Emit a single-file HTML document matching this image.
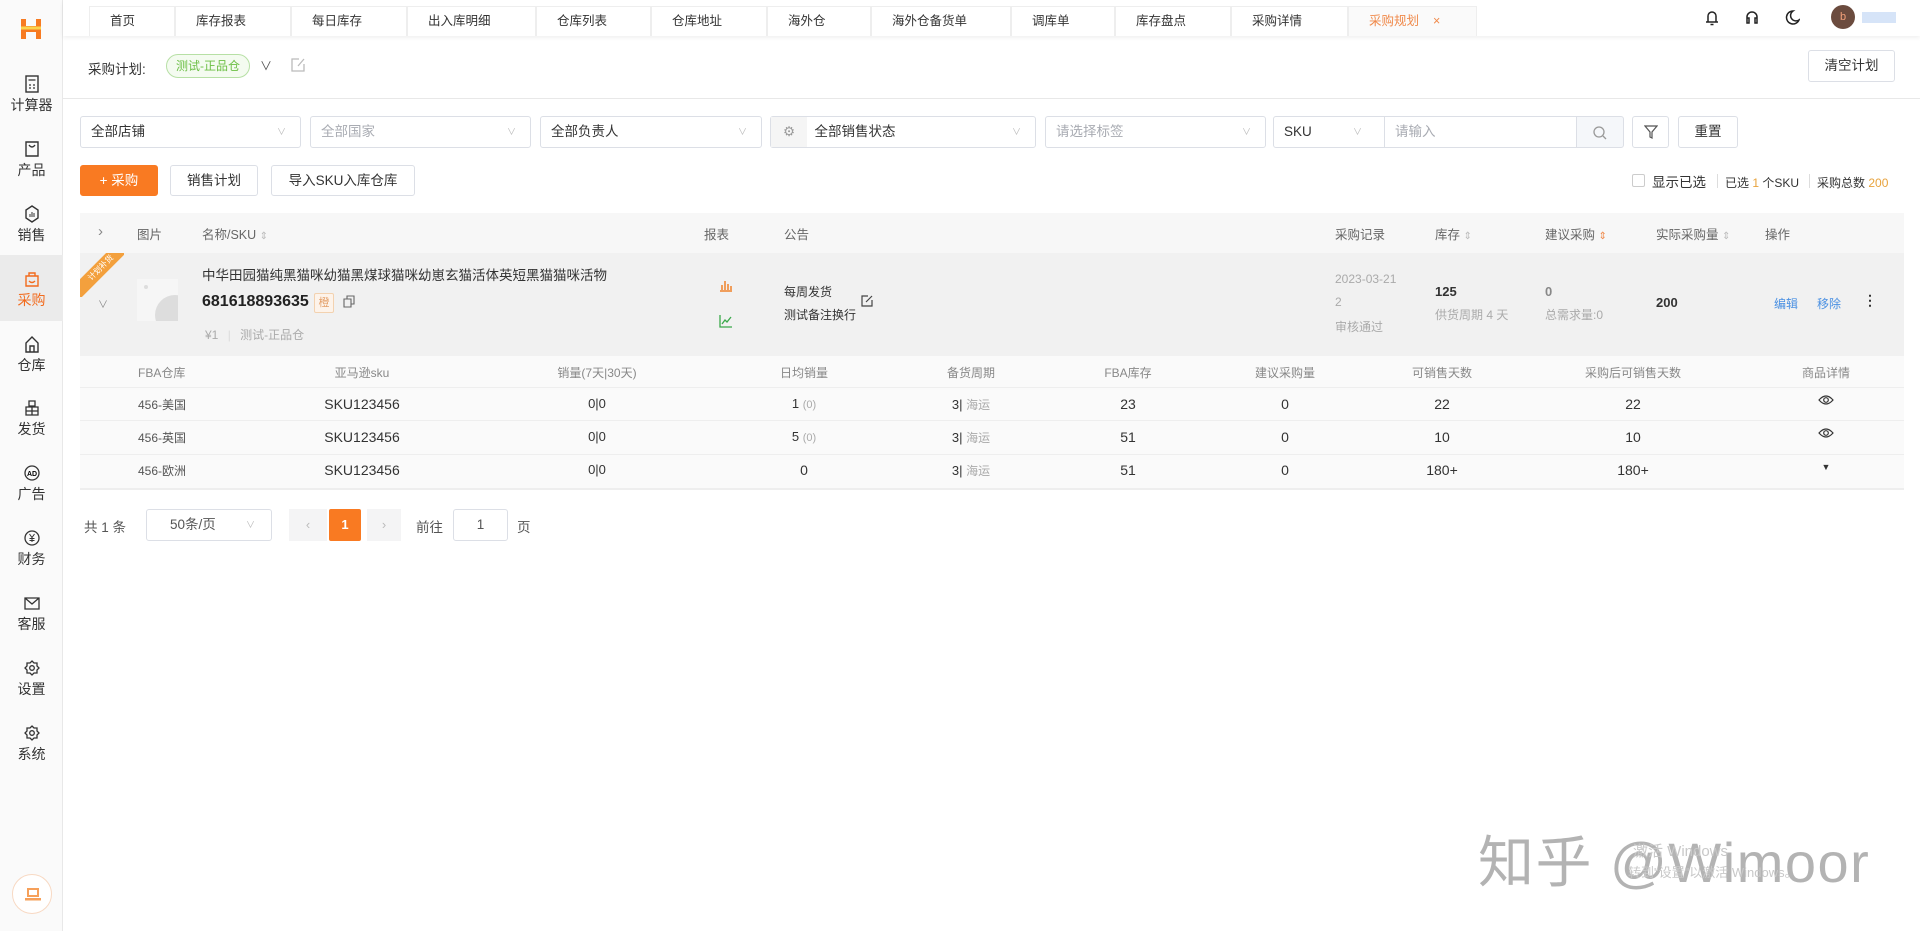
<!DOCTYPE html>
<html><head><meta charset="utf-8">
<style>
*{box-sizing:border-box;margin:0;padding:0}
body{width:1920px;height:931px;overflow:hidden;background:#fff;font-family:"Liberation Sans","Noto Sans CJK SC",sans-serif;font-size:13px;color:#333;position:relative}
.a{position:absolute;white-space:nowrap}
.side{position:absolute;left:0;top:0;width:63px;height:931px;background:#fafafa;border-right:1px solid #e8e8e8}
.si{position:absolute;left:0;width:63px;text-align:center;font-size:14px;color:#333}
.si svg{display:block;margin:0 auto 2px}
.tabs{position:absolute;left:63px;top:0;right:0;height:36px;background:#fff;box-shadow:0 2px 4px rgba(0,0,0,.06)}
.tab{position:absolute;top:6px;height:30px;line-height:28px;border:1px solid #eee;border-bottom:none;padding-left:20px;font-size:12.5px;color:#333;background:#fff}
.box{position:absolute;border:1px solid #dcdfe6;border-radius:3px;height:32px;line-height:30px;padding-left:10px;font-size:13.5px;color:#333;background:#fff}
.ph{color:#a8abb2}
.chev{position:absolute;right:14px;top:0;color:#bbb;font-size:9px}
.btn{position:absolute;border:1px solid #dcdfe6;border-radius:3px;height:31px;line-height:29px;text-align:center;font-size:13.5px;background:#fff;color:#333}
.g{color:#999}
.hd{color:#666;font-size:12.5px}
.sh{color:#888}
.c{position:absolute;text-align:center;transform:translateX(-50%);white-space:nowrap}
</style></head><body>

<div class="side">
 <svg class="a" style="left:18px;top:17px" width="26" height="24" viewBox="0 0 26 24"><path d="M3 2h5v7h10V2h5v20h-5v-7H8v7H3z" fill="#f77b22"/><path d="M3 11h20" stroke="#fbd34d" stroke-width="3"/></svg>
 <div class="si" style="top:75px"><svg width="16" height="18" viewBox="0 0 16 18"><rect x="2" y="1" width="12" height="16" fill="none" stroke="#333" stroke-width="1.4"/><path d="M4.5 5h7M5 10h2M9 10h2M5 13h2M9 13h2" stroke="#333" stroke-width="1.2"/></svg>计算器</div>
 <div class="si" style="top:140px"><svg width="16" height="18" viewBox="0 0 16 18"><path d="M2 2h12v14H2z M5 5q3 4 6 0" fill="none" stroke="#333" stroke-width="1.4"/></svg>产品</div>
 <div class="si" style="top:205px"><svg width="16" height="18" viewBox="0 0 16 18"><path d="M8 1l6 4v8l-6 4-6-4V5z" fill="none" stroke="#333" stroke-width="1.4"/><path d="M6 9v3M8 7v5M10 8v4" stroke="#333"/></svg>销售</div>
 <div style="position:absolute;left:0;top:255px;width:63px;height:66px;background:#ebebeb"></div>
 <div class="si" style="top:270px;color:#f26b1d"><svg width="16" height="18" viewBox="0 0 16 18"><path d="M2 6h12v10H2z M5 6V3h6v3 M5 11q3 3 6 0" fill="none" stroke="#f26b1d" stroke-width="1.4"/></svg>采购</div>
 <div class="si" style="top:335px"><svg width="16" height="18" viewBox="0 0 16 18"><path d="M2 8l6-6 6 6v9H2z M6 17v-6h4v6" fill="none" stroke="#333" stroke-width="1.4"/></svg>仓库</div>
 <div class="si" style="top:399px"><svg width="16" height="18" viewBox="0 0 16 18"><path d="M5 2h6v5H5z M2 8h12v8H2z M8 8v8M2 12h12" fill="none" stroke="#333" stroke-width="1.3"/></svg>发货</div>
 <div class="si" style="top:464px"><svg width="16" height="18" viewBox="0 0 16 18"><circle cx="8" cy="9" r="7" fill="none" stroke="#333" stroke-width="1.3"/><text x="8" y="12" font-size="7" text-anchor="middle" font-family="Liberation Sans" font-weight="bold">AD</text></svg>广告</div>
 <div class="si" style="top:529px"><svg width="16" height="18" viewBox="0 0 16 18"><circle cx="8" cy="9" r="7" fill="none" stroke="#333" stroke-width="1.3"/><path d="M5.5 5l2.5 3.5L10.5 5M8 8.5V13M5.5 9.5h5M5.5 11.5h5" stroke="#333" fill="none"/></svg>财务</div>
 <div class="si" style="top:594px"><svg width="18" height="18" viewBox="0 0 18 18"><path d="M2 4h14v11H2z M2 4l7 6 7-6" fill="none" stroke="#333" stroke-width="1.3"/></svg>客服</div>
 <div class="si" style="top:659px"><svg width="16" height="18" viewBox="0 0 16 18"><circle cx="8" cy="9" r="2.3" fill="none" stroke="#333" stroke-width="1.3"/><path d="M8 2l2 2h3v3l2 2-2 2v3h-3l-2 2-2-2H3v-3L1 9l2-2V4h3z" fill="none" stroke="#333" stroke-width="1.3"/></svg>设置</div>
 <div class="si" style="top:724px"><svg width="16" height="18" viewBox="0 0 16 18"><circle cx="8" cy="9" r="2.3" fill="none" stroke="#333" stroke-width="1.3"/><path d="M8 2l2 2h3v3l2 2-2 2v3h-3l-2 2-2-2H3v-3L1 9l2-2V4h3z" fill="none" stroke="#333" stroke-width="1.3"/></svg>系统</div>
 <div class="a" style="left:12px;top:874px;width:40px;height:40px;border-radius:50%;border:1px solid #f8d9c3;background:#fff"><svg class="a" style="left:12px;top:12px" width="16" height="14" viewBox="0 0 16 14"><rect x="2" y="1" width="12" height="9" fill="#f6a05a"/><rect x="0" y="11" width="16" height="2.5" fill="#f6a05a"/><rect x="4" y="3" width="8" height="5" fill="#fff"/></svg></div>
</div>

<div class="tabs">
 <div class="tab" style="left:26px;width:86px">首页</div>
 <div class="tab" style="left:112px;width:116px">库存报表</div>
 <div class="tab" style="left:228px;width:116px">每日库存</div>
 <div class="tab" style="left:344px;width:129px">出入库明细</div>
 <div class="tab" style="left:473px;width:115px">仓库列表</div>
 <div class="tab" style="left:588px;width:116px">仓库地址</div>
 <div class="tab" style="left:704px;width:104px">海外仓</div>
 <div class="tab" style="left:808px;width:140px">海外仓备货单</div>
 <div class="tab" style="left:948px;width:104px">调库单</div>
 <div class="tab" style="left:1052px;width:116px">库存盘点</div>
 <div class="tab" style="left:1168px;width:117px">采购详情</div>
 <div class="tab" style="left:1285px;width:129px;color:#f08a4b;background:#fafafa">采购规划<span style="position:absolute;left:84px;color:#f08a4b">×</span></div>
</div>
<svg class="a" style="left:1704px;top:9px" width="16" height="18" viewBox="0 0 16 18"><path d="M4 13V7a4 4 0 018 0v6M2 13h12M6.5 15.5h3" fill="none" stroke="#222" stroke-width="1.5"/></svg>
<svg class="a" style="left:1744px;top:9px" width="16" height="18" viewBox="0 0 16 18"><path d="M3 10V8a5 5 0 0110 0v2M3 9h2v5H3zM11 9h2v5h-2z" fill="none" stroke="#222" stroke-width="1.5"/></svg>
<svg class="a" style="left:1784px;top:9px" width="16" height="18" viewBox="0 0 16 18"><path d="M9 2a6.5 6.5 0 106 9A5 5 0 019 2z" fill="none" stroke="#222" stroke-width="1.5"/></svg>
<div class="a" style="left:1831px;top:5px;width:24px;height:24px;border-radius:50%;background:#6b4b3e;color:#f2a07a;font-size:11px;text-align:center;line-height:24px">b</div>
<div class="a" style="left:1862px;top:12px;width:34px;height:11px;background:#d6e4f8"></div>

<div class="a" style="left:88px;top:58px;font-size:13.5px">采购计划:</div>
<div class="a" style="left:166px;top:54px;width:84px;height:24px;border:1px solid #b7e0a5;border-radius:12px;background:#f4fbf0;color:#6cbf45;font-size:12px;text-align:center;line-height:22px">测试-正品仓</div>
<div class="a" style="left:260px;top:57px;color:#555;font-size:12px">∨</div>
<svg class="a" style="left:290px;top:57px" width="16" height="16" viewBox="0 0 16 16"><path d="M9 2H2v12h12V7M8 9l6-7" fill="none" stroke="#bbb" stroke-width="1.3"/></svg>
<div class="btn" style="left:1808px;top:50px;width:87px;height:32px;line-height:30px">清空计划</div>
<div class="a" style="left:63px;top:98px;width:1857px;height:1px;background:#e8e8e8"></div>

<div class="box" style="left:80px;top:116px;width:221px">全部店铺<span class="chev">∨</span></div>
<div class="box ph" style="left:310px;top:116px;width:221px">全部国家<span class="chev">∨</span></div>
<div class="box" style="left:540px;top:116px;width:222px">全部负责人<span class="chev">∨</span></div>
<div class="box" style="left:770px;top:116px;width:266px;padding-left:0"><span style="display:inline-block;width:36px;height:30px;background:#f5f5f5;text-align:center;color:#999">⚙</span>&nbsp; 全部销售状态<span class="chev">∨</span></div>
<div class="box ph" style="left:1045px;top:116px;width:221px">请选择标签<span class="chev">∨</span></div>
<div class="box" style="left:1273px;top:116px;width:112px;border-radius:3px 0 0 3px">SKU<span class="chev" style="right:22px">∨</span></div>
<div class="box ph" style="left:1384px;top:116px;width:193px;border-radius:0">请输入</div>
<div class="box" style="left:1576px;top:116px;width:48px;background:#f5f7fa;border-radius:0 3px 3px 0;padding:0"><svg style="margin:8px 0 0 15px" width="16" height="16" viewBox="0 0 16 16"><circle cx="7" cy="7" r="5" fill="none" stroke="#999" stroke-width="1.3"/><path d="M11 11l3 3" stroke="#999" stroke-width="1.3"/></svg></div>
<div class="box" style="left:1632px;top:116px;width:37px;padding:0"><svg style="margin:8px 0 0 11px" width="14" height="14" viewBox="0 0 14 14"><path d="M1 1h12L8 7v6L6 12V7z" fill="none" stroke="#555" stroke-width="1.2"/></svg></div>
<div class="box" style="left:1678px;top:116px;width:60px;padding:0;text-align:center">重置</div>

<div class="btn" style="left:80px;top:165px;width:78px;background:#f97a22;border-color:#f97a22;color:#fff">+ 采购</div>
<div class="btn" style="left:170px;top:165px;width:88px">销售计划</div>
<div class="btn" style="left:271px;top:165px;width:144px">导入SKU入库仓库</div>
<div class="a" style="left:1632px;top:174px;width:13px;height:13px;border:1px solid #ccc;border-radius:2px"></div>
<div class="a" style="left:1652px;top:171px;font-size:13.5px;color:#333">显示已选</div>
<div class="a" style="left:1717px;top:174px;width:1px;height:14px;background:#ddd"></div>
<div class="a" style="left:1725px;top:174px;font-size:12px">已选 <span style="color:#e8a33d">1</span> 个SKU</div>
<div class="a" style="left:1809px;top:174px;width:1px;height:14px;background:#ddd"></div>
<div class="a" style="left:1817px;top:174px;font-size:12px">采购总数 <span style="color:#e8a33d">200</span></div>

<div class="a" style="left:80px;top:213px;width:1824px;height:40px;background:#f7f7f7"></div>
<div class="a hd" style="left:98px;top:223px;font-size:15px;color:#888">›</div>
<div class="a hd" style="left:137px;top:224px">图片</div>
<div class="a hd" style="left:202px;top:224px">名称/SKU <span style="color:#bbb;font-size:10px">⇕</span></div>
<div class="a hd" style="left:704px;top:224px">报表</div>
<div class="a hd" style="left:784px;top:224px">公告</div>
<div class="a hd" style="left:1335px;top:224px">采购记录</div>
<div class="a hd" style="left:1435px;top:224px">库存 <span style="color:#bbb;font-size:10px">⇕</span></div>
<div class="a hd" style="left:1545px;top:224px">建议采购 <span style="color:#f08a4b;font-size:10px">⇕</span></div>
<div class="a hd" style="left:1656px;top:224px">实际采购量 <span style="color:#bbb;font-size:10px">⇕</span></div>
<div class="a hd" style="left:1765px;top:224px">操作</div>

<div class="a" style="left:80px;top:253px;width:1824px;height:103px;background:#f1f1f1"></div>
<div class="a" style="left:80px;top:253px;width:44px;height:44px;overflow:hidden"><div style="position:absolute;left:-24px;top:8px;width:90px;height:14px;background:#f3a03d;transform:rotate(-45deg);color:#fff;font-size:8px;text-align:center;line-height:14px">计划补货</div></div>
<div class="a" style="left:98px;top:296px;color:#888;font-size:10px">∨</div>
<div class="a" style="left:137px;top:279px;width:41px;height:42px;background:#f6f6f6;overflow:hidden"><div style="position:absolute;left:18px;top:16px;width:40px;height:40px;border-radius:50%;background:#ddd"></div><div style="position:absolute;left:7px;top:6px;width:4px;height:4px;border-radius:50%;background:#ddd"></div></div>
<div class="a" style="left:202px;top:264px;font-size:13.5px">中华田园猫纯黑猫咪幼猫黑煤球猫咪幼崽玄猫活体英短黑猫猫咪活物</div>
<div class="a" style="left:202px;top:293px;font-size:16px;font-weight:bold;color:#222">681618893635</div>
<div class="a" style="left:314px;top:293px;width:20px;height:20px;border:1px solid #f3d2b0;background:#fdf3ea;color:#e4a06a;font-size:11px;text-align:center;line-height:18px;border-radius:2px">橙</div>
<svg class="a" style="left:343px;top:295px" width="12" height="13" viewBox="0 0 12 13"><path d="M1 4h7v8H1zM4 4V1h7v8H8" fill="none" stroke="#666" stroke-width="1.1"/></svg>
<div class="a g" style="left:205px;top:326px;font-size:12px;color:#aaa">¥1 <span style="color:#ddd;margin:0 6px">|</span> 测试-正品仓</div>
<svg class="a" style="left:719px;top:278px" width="14" height="14" viewBox="0 0 14 14"><path d="M1 13h12M3 12V7M6 12V3M9 12V6M12 12V8" stroke="#f0832a" stroke-width="1.5"/></svg>
<svg class="a" style="left:719px;top:314px" width="14" height="14" viewBox="0 0 14 14"><path d="M1 1v12h12M3 10l3-4 2 2 4-5" fill="none" stroke="#3aa84a" stroke-width="1.3"/></svg>
<div class="a" style="left:784px;top:283px;font-size:12px">每周发货</div>
<div class="a" style="left:784px;top:306px;font-size:12px">测试备注换行</div>
<svg class="a" style="left:861px;top:295px" width="12" height="12" viewBox="0 0 12 12"><path d="M7 1H1v10h10V5M5 7l6-6" fill="none" stroke="#444" stroke-width="1.2"/></svg>
<div class="a" style="left:1335px;top:272px;font-size:12px;color:#aaa">2023-03-21</div>
<div class="a" style="left:1335px;top:295px;font-size:12px;color:#aaa">2</div>
<div class="a" style="left:1335px;top:318px;font-size:12px;color:#aaa">审核通过</div>
<div class="a" style="left:1435px;top:284px;font-size:13px;font-weight:bold">125</div>
<div class="a" style="left:1435px;top:306px;font-size:12px;color:#aaa">供货周期 4 天</div>
<div class="a" style="left:1545px;top:284px;font-size:13px;font-weight:bold;color:#888">0</div>
<div class="a" style="left:1545px;top:306px;font-size:12px;color:#aaa">总需求量:0</div>
<div class="a" style="left:1656px;top:295px;font-size:13px;font-weight:bold">200</div>
<div class="a" style="left:1774px;top:295px;font-size:12px;color:#4a90e2">编辑</div>
<div class="a" style="left:1817px;top:295px;font-size:12px;color:#4a90e2">移除</div>
<div class="a" style="left:1863px;top:292px;font-size:14px;font-weight:bold;color:#333">⋮</div>

<div class="a" style="left:80px;top:356px;width:1824px;height:132px;background:#fafafa"></div>
<div class="a" style="left:80px;top:387px;width:1824px;height:1px;background:#eee"></div>
<div class="a" style="left:80px;top:420px;width:1824px;height:1px;background:#eee"></div>
<div class="a" style="left:80px;top:454px;width:1824px;height:1px;background:#eee"></div>
<div class="a" style="left:80px;top:488px;width:1824px;height:2px;background:#eee"></div>

<div class="a sh" style="left:138px;top:364px;font-size:12px">FBA仓库</div>
<div class="c sh" style="left:362px;top:364px;font-size:12px">亚马逊sku</div>
<div class="c sh" style="left:597px;top:364px;font-size:12px">销量(7天|30天)</div>
<div class="c sh" style="left:804px;top:364px;font-size:12px">日均销量</div>
<div class="c sh" style="left:971px;top:364px;font-size:12px">备货周期</div>
<div class="c sh" style="left:1128px;top:364px;font-size:12px">FBA库存</div>
<div class="c sh" style="left:1285px;top:364px;font-size:12px">建议采购量</div>
<div class="c sh" style="left:1442px;top:364px;font-size:12px">可销售天数</div>
<div class="c sh" style="left:1633px;top:364px;font-size:12px">采购后可销售天数</div>
<div class="c sh" style="left:1826px;top:364px;font-size:12px">商品详情</div>

<div class="a" style="left:138px;top:396px;font-size:12px;color:#555">456-美国</div>
<div class="c" style="left:362px;top:396px;font-size:14px">SKU123456</div>
<div class="c" style="left:597px;top:396px">0|0</div>
<div class="c" style="left:804px;top:396px">1 <span style="color:#aaa;font-size:11px">(0)</span></div>
<div class="c" style="left:971px;top:396px">3| <span style="color:#aaa;font-size:12px">海运</span></div>
<div class="c" style="left:1128px;top:396px;font-size:14px">23</div>
<div class="c" style="left:1285px;top:396px;font-size:14px">0</div>
<div class="c" style="left:1442px;top:396px;font-size:14px">22</div>
<div class="c" style="left:1633px;top:396px;font-size:14px">22</div>
<svg class="a" style="left:1818px;top:394px" width="16" height="12" viewBox="0 0 16 12"><path d="M1 6q7-8 14 0q-7 8-14 0z" fill="none" stroke="#333" stroke-width="1.2"/><circle cx="8" cy="6" r="2.3" fill="none" stroke="#333" stroke-width="1.2"/></svg>

<div class="a" style="left:138px;top:429px;font-size:12px;color:#555">456-英国</div>
<div class="c" style="left:362px;top:429px;font-size:14px">SKU123456</div>
<div class="c" style="left:597px;top:429px">0|0</div>
<div class="c" style="left:804px;top:429px">5 <span style="color:#aaa;font-size:11px">(0)</span></div>
<div class="c" style="left:971px;top:429px">3| <span style="color:#aaa;font-size:12px">海运</span></div>
<div class="c" style="left:1128px;top:429px;font-size:14px">51</div>
<div class="c" style="left:1285px;top:429px;font-size:14px">0</div>
<div class="c" style="left:1442px;top:429px;font-size:14px">10</div>
<div class="c" style="left:1633px;top:429px;font-size:14px">10</div>
<svg class="a" style="left:1818px;top:427px" width="16" height="12" viewBox="0 0 16 12"><path d="M1 6q7-8 14 0q-7 8-14 0z" fill="none" stroke="#333" stroke-width="1.2"/><circle cx="8" cy="6" r="2.3" fill="none" stroke="#333" stroke-width="1.2"/></svg>

<div class="a" style="left:138px;top:462px;font-size:12px;color:#555">456-欧洲</div>
<div class="c" style="left:362px;top:462px;font-size:14px">SKU123456</div>
<div class="c" style="left:597px;top:462px">0|0</div>
<div class="c" style="left:804px;top:462px;font-size:14px">0</div>
<div class="c" style="left:971px;top:462px">3| <span style="color:#aaa;font-size:12px">海运</span></div>
<div class="c" style="left:1128px;top:462px;font-size:14px">51</div>
<div class="c" style="left:1285px;top:462px;font-size:14px">0</div>
<div class="c" style="left:1442px;top:462px;font-size:14px">180+</div>
<div class="c" style="left:1633px;top:462px;font-size:14px">180+</div>
<div class="c" style="left:1826px;top:462px;font-size:9px">▼</div>

<div class="a" style="left:84px;top:516px;font-size:13.5px;color:#555">共 1 条</div>
<div class="box" style="left:146px;top:509px;width:126px;padding-left:23px;color:#555">50条/页<span class="chev" style="right:16px">∨</span></div>
<div class="a" style="left:289px;top:509px;width:38px;height:32px;background:#f4f4f5;color:#bbb;text-align:center;line-height:32px">‹</div>
<div class="a" style="left:329px;top:509px;width:32px;height:32px;background:#f97a22;color:#fff;text-align:center;line-height:32px;font-weight:bold;border-radius:2px">1</div>
<div class="a" style="left:367px;top:509px;width:34px;height:32px;background:#f4f4f5;color:#bbb;text-align:center;line-height:32px">›</div>
<div class="a" style="left:416px;top:516px;font-size:13.5px;color:#555">前往</div>
<div class="box" style="left:453px;top:509px;width:55px;padding:0;text-align:center;color:#555">1</div>
<div class="a" style="left:517px;top:516px;font-size:13.5px;color:#555">页</div>

<div class="a" style="left:1478px;top:818px;font-size:56px;color:#b3b3b3;letter-spacing:1.5px">知乎 @Wimoor</div>
<div class="a" style="left:1633px;top:840px;font-size:15px;color:#c8c8c8">激活 Windows</div>
<div class="a" style="left:1628px;top:862px;font-size:13px;color:#c8c8c8">转到"设置"以激活 Windows。</div>
</body></html>
